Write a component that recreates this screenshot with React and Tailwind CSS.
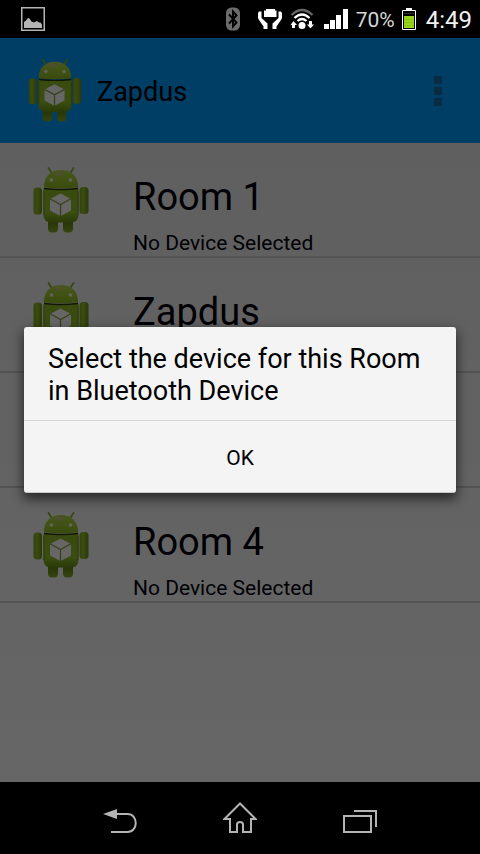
import React from "react";

function Robot({ className, id }) {
  return (
    <svg viewBox="0 0 56 66" className={className} aria-hidden="true">
      <defs>
        <linearGradient id={id + "h"} x1="0" y1="0" x2="0" y2="1">
          <stop offset="0" stopColor="#b4d84f" />
          <stop offset="0.5" stopColor="#a3cd32" />
          <stop offset="1" stopColor="#8fba22" />
        </linearGradient>
        <linearGradient id={id + "b"} x1="0" y1="0" x2="0" y2="1">
          <stop offset="0" stopColor="#8fba26" />
          <stop offset="0.7" stopColor="#94c029" />
          <stop offset="1" stopColor="#6a8e17" />
        </linearGradient>
        <linearGradient id={id + "a"} x1="0" y1="0" x2="1" y2="0">
          <stop offset="0" stopColor="#7fa523" />
          <stop offset="0.4" stopColor="#94bf2a" />
          <stop offset="1" stopColor="#6a8e1b" />
        </linearGradient>
        <linearGradient id={id + "l"} x1="0" y1="0" x2="0" y2="1">
          <stop offset="0.3" stopColor="#5d7d14" />
          <stop offset="1" stopColor="#86ae26" />
        </linearGradient>
      </defs>
      <path d="M15.500 1 L19 6.500 M40.500 1 L37 6.500" stroke="#8aae2a" strokeWidth="1.700" strokeLinecap="round" />
      <rect x="15" y="48" width="10" height="17.500" rx="4" fill={"url(#" + id + "l)"} />
      <rect x="30" y="48" width="10" height="17.500" rx="4" fill={"url(#" + id + "l)"} />
      <rect x="0.500" y="20.500" width="8.500" height="27" rx="3.500" fill={"url(#" + id + "a)"} />
      <rect x="46.500" y="20" width="9" height="27" rx="3.500" fill={"url(#" + id + "a)"} />
      <path d="M10.500 22 H45.500 V48 Q45.500 55.500 37 55.500 H19 Q10.500 55.500 10.500 48 Z" fill={"url(#" + id + "b)"} />
      <path d="M11 24 V48 M45 24 V48" stroke="#6b8d1a" />
      <path d="M11 20.500 C10.500 9 18 3 28 3 C38 3 45.500 9 45 20.500 Q28 22 11 20.500 Z" fill={"url(#" + id + "h)"} />
      <path d="M11 21.500 Q28 23.300 45 21.500" fill="none" stroke="#2b390a" strokeWidth="1.500" />
      <ellipse cx="26" cy="6.500" rx="5" ry="2" fill="#d9b99a" opacity="0.5" />
      <circle cx="18.500" cy="13" r="1.800" fill="#f4f7e8" />
      <circle cx="37.500" cy="13" r="1.800" fill="#f4f7e8" />
      <path d="M27.500 26.500 L38 32 V43.500 L27.500 49 L17 43.500 V32 Z" fill="#ffffff" />
      <path d="M17 31.800 L27.500 37.500 L38 31.800 M27.500 37.500 V49" fill="none" stroke="#86a53c" strokeWidth="1.300" />
    </svg>
  );
}

function StatusBar() {
  return (
    <header className="flex h-[38px] shrink-0 items-center bg-black pr-2 pl-[21px] text-[#f2f2f2]">
      <svg className="size-6" viewBox="0 0 24 24" role="img" aria-label="Picture">
        <path d="M0.750 0.750 H23.250 V23.250 H0.750 Z" fill="none" stroke="#b5b5b5" strokeWidth="1.500" />
        <path d="M3 21 V15 L5 13.500 L7 11 L8.500 11.500 L10.500 14.500 L13 15.500 L16 14 L18 15.500 L19.500 15.500 L21 17.500 V21 Z" fill="#b5b5b5" />
      </svg>
      <div className="ml-auto flex items-center">
        <svg className="h-6 w-[14px]" viewBox="0 0 14 24" role="img" aria-label="Bluetooth">
          <rect y="0.500" width="14" height="23" rx="5.500" fill="#6c6c6c" />
          <path d="M3 7.500 L10.500 15.500 L7 19.500 V4.500 L10.500 8.500 L3 16.500" fill="none" stroke="#000" strokeWidth="1.900" />
        </svg>
        <svg className="ml-[18px] h-5 w-6" viewBox="0 0 24 20" role="img" aria-label="Power saving">
          <path d="M6 1.500 H8 V0 H17 V1.500 H18.500 V8 H6 Z" fill="#fff" />
          <path d="M1 2.500 H3.500 V9 L9.500 14.500 V20 H5.500 V17.500 L1 11 L0 9 V4 Z M23 2.500 H20.500 V9 L14.500 14.500 V20 H18.500 V17.500 L23 11 L24 9 V4 Z" fill="#fff" />
        </svg>
        <svg className="ml-2 h-[22px] w-6" viewBox="0 0 24 22" role="img" aria-label="Wi-Fi">
          <path d="M1.500 7 Q12 -3 22.500 7" fill="none" stroke="#656565" strokeWidth="2.300" />
          <path d="M4.500 10 Q12 3 19.500 10" fill="none" stroke="#fff" strokeWidth="2.300" />
          <path d="M7.500 13 Q12 9 16.500 13" fill="none" stroke="#fff" strokeWidth="2.300" />
          <circle cx="12" cy="17.500" r="3.500" fill="#fff" />
          <path d="M3.500 13 L7 17 H5 V20 H2 V17 H0.500 Z M20.500 20.500 L24 16.500 H22 V13 H19 V16.500 H17 Z" fill="#fff" />
        </svg>
        <svg className="ml-[10px] h-5 w-6" viewBox="0 0 24 20" role="img" aria-label="Signal">
          <path d="M0 15 H5 V20 H0 Z M6 11 H11 V20 H6 Z M12 6 H17 V20 H12 Z M19 0 H24 V20 H19 Z" fill="#fff" />
        </svg>
        <span className="ml-2 pt-px text-[21px] leading-6 text-[#d6d6d6]">70%</span>
        <svg className="ml-[7px] h-[22px] w-[14px]" viewBox="0 0 14 22" role="img" aria-label="Battery">
          <path d="M4 0 H10 V2 H4 Z" fill="#fff" />
          <path d="M0.500 2.500 H13.500 V21.500 H0.500 Z" fill="none" stroke="#fff" />
          <path d="M2 8 H12 V20 H2 Z" fill="#96d61a" />
          <path d="M2 11.500 H12 M2 14.500 H12 M2 17.500 H12" stroke="#80c010" strokeWidth="0.800" />
          <path d="M2 5.500 H12" stroke="#333" />
        </svg>
        <time className="ml-[10px] pt-px text-2xl leading-6">4:49</time>
      </div>
    </header>
  );
}

const rooms = [
  { id: "r1", name: "Room 1", device: "No Device Selected" },
  { id: "r2", name: "Zapdus" },
  { id: "r3" },
  { id: "r4", name: "Room 4", device: "No Device Selected" },
];

function RoomRow({ room }) {
  return (
    <li className="flex h-[115px] items-start border-b-2 border-[#d0d0d0] pl-[33px]">
      {room.name && (
        <>
          <Robot id={room.id} className="mt-6 h-[66px] w-14 shrink-0" />
          <div className="ml-11 pt-8">
            <h2 className="text-[38px] leading-11 text-[#02020a]">{room.name}</h2>
            {room.device && <p className="mt-3 text-[21px] leading-6 text-[#02020a]">{room.device}</p>}
          </div>
        </>
      )}
    </li>
  );
}

function Dialog() {
  return (
    <div className="absolute inset-0 flex items-center bg-black/60 px-6">
      <div
        role="alertdialog"
        aria-modal="true"
        aria-labelledby="message"
        className="w-full rounded-[3px] border-b border-[#c8c8c8] bg-[#f4f4f4] shadow-[0_5px_12px_1px_rgba(0,0,0,0.6)]"
      >
        <p id="message" className="px-6 pt-4 pb-[13px] text-[27px] leading-8 text-black">
          Select the device for this Room in Bluetooth Device
        </p>
        <button type="button" className="block h-[72px] w-full border-t border-[#d6d6d6] pt-1 text-[21px] text-black">
          OK
        </button>
      </div>
    </div>
  );
}

function NavBar() {
  const button = "flex h-[72px] w-[120px] items-center justify-center";
  return (
    <nav className="flex h-[72px] shrink-0 justify-center bg-black">
      <button type="button" aria-label="Back" className={button}>
        <svg className="h-8 w-[34px]" viewBox="0 0 34 32" fill="none" stroke="#b4b4b4" strokeWidth="2">
          <path d="M13 12 H24.500 C35.500 12 35.500 30 24.500 30 H8" />
          <path d="M0 12 L14 7 V17 Z" fill="#b4b4b4" stroke="none" />
        </svg>
      </button>
      <button type="button" aria-label="Home" className={button}>
        <svg className="h-8 w-[34px]" viewBox="0 0 34 32" fill="none" stroke="#b4b4b4" strokeWidth="2">
          <path d="M17 1.500 L1.500 17 H7 V30 H14 V22.500 Q14 20 17 20 Q20 20 20 22.500 V30 H28 V17 H32.500 Z" />
        </svg>
      </button>
      <button type="button" aria-label="Recent apps" className={button}>
        <svg className="h-8 w-[34px]" viewBox="0 0 34 32" fill="none" stroke="#b4b4b4" strokeWidth="2">
          <path d="M1 14 H28 V30 H1 Z M11 9 H33 V25" />
        </svg>
      </button>
    </nav>
  );
}

export default function App() {
  return (
    <div className="flex min-h-screen flex-col bg-black font-[Roboto,sans-serif]">
      <StatusBar />
      <main className="relative flex grow flex-col bg-linear-to-b from-[#ebebeb] to-[#ffffff]">
        <div className="flex h-[105px] items-center bg-[#009bff] pr-[38px] pl-7">
          <Robot id="app" className="h-[63px] w-[54px]" />
          <h1 className="ml-[15px] pt-[2px] text-[27px] leading-8 text-black">Zapdus</h1>
          <button type="button" aria-label="More options" className="ml-auto flex flex-col gap-[3px]">
            <span className="size-2 bg-[#1a6ea5]" />
            <span className="size-2 bg-[#1a6ea5]" />
            <span className="size-2 bg-[#1a6ea5]" />
          </button>
        </div>
        <ul>
          {rooms.map((room) => (
            <RoomRow key={room.id} room={room} />
          ))}
        </ul>
        <Dialog />
      </main>
      <NavBar />
    </div>
  );
}
